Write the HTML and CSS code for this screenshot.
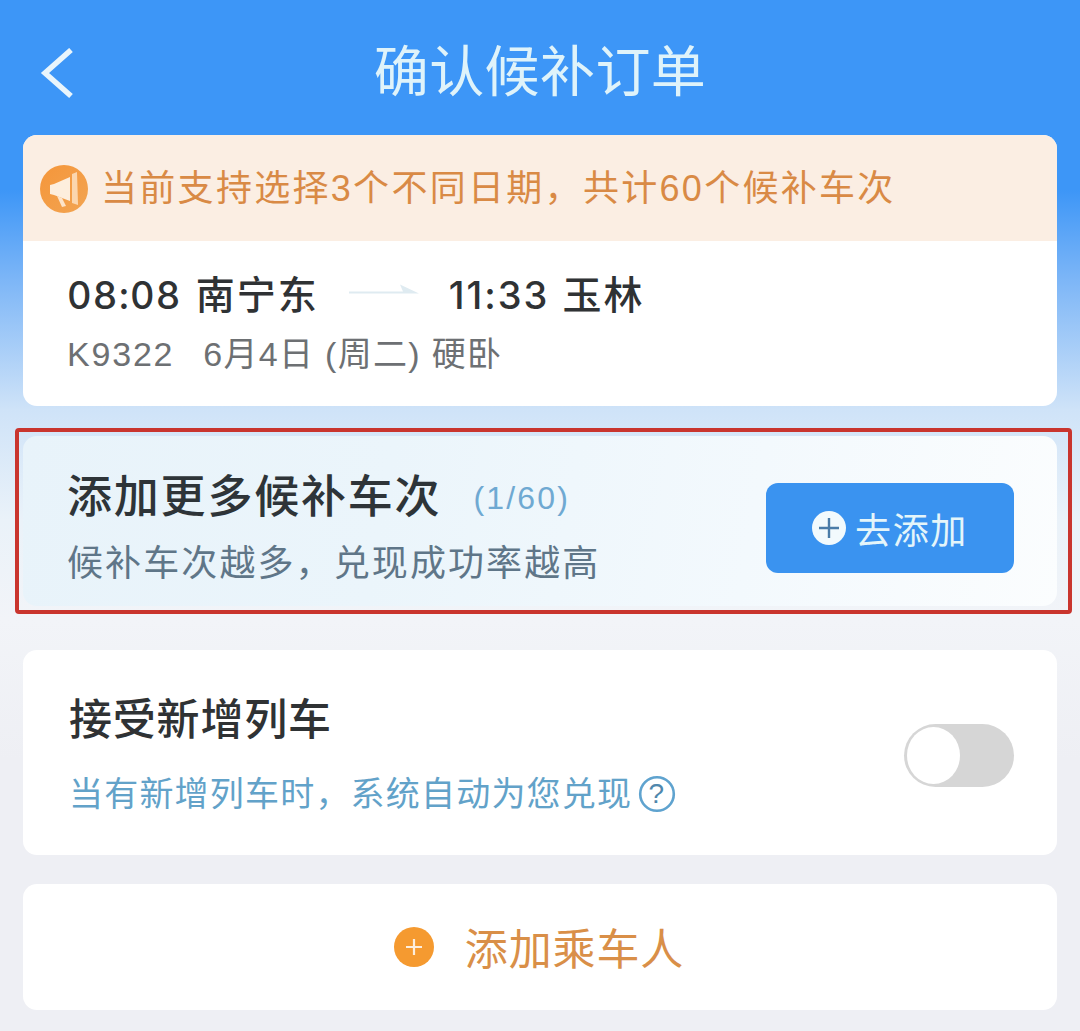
FILE: index.html
```html
<!DOCTYPE html>
<html lang="zh-CN">
<head>
<meta charset="utf-8">
<title>确认候补订单</title>
<link rel="stylesheet" href="styles.css">
</head>
<body>
<div class="page">
  <header class="nav">
    <svg class="back" viewBox="0 0 36 52" aria-hidden="true"><path d="M31 2 L5 25 L31 48"/></svg>
    <h1 class="nav-title">确认候补订单</h1>
  </header>

  <section class="card trip">
    <div class="notice">
      <svg class="horn" viewBox="0 0 48 48" aria-hidden="true">
        <defs><linearGradient id="hornFill" x1="0" y1="0" x2="1" y2="1"><stop offset="0" stop-color="#f5963a"/><stop offset="1" stop-color="#f2a452"/></linearGradient></defs>
        <circle cx="24" cy="24" r="24" fill="url(#hornFill)"/>
        <path d="M10 20 L14 19 L30 12 L30 36 L14 30 L10 29 Z" fill="#fdeedd"/>
        <path d="M32 9 L37 7 L38 40 L32 38 Z" fill="#fbd6ae"/>
        <path d="M17 31 L22 33 L26 41 L22 42 Z" fill="#fde4ca"/>
      </svg>
      <span class="notice-text">当前支持选择3个不同日期，共计60个候补车次</span>
    </div>
    <div class="trip-body">
      <div class="trip-line">
        <span class="time">08:08</span>
        <span class="station">南宁东</span>
        <svg class="arrow" viewBox="0 0 70 12" aria-hidden="true"><path d="M0 7.5 H54 L51 0.5 L70 9.5 H0 Z"/></svg>
        <span class="time time-end">11:33</span>
        <span class="station">玉林</span>
      </div>
      <div class="trip-meta"><span class="train-no">K9322</span><span>6月4日 (周二) 硬卧</span></div>
    </div>
  </section>

  <section class="card more">
    <div class="more-info">
      <div class="more-head"><span class="more-title">添加更多候补车次</span><span class="more-count">(1/60)</span></div>
      <p class="more-sub">候补车次越多，兑现成功率越高</p>
    </div>
    <div class="add-btn">
      <svg class="add-icon" viewBox="0 0 34 34" aria-hidden="true"><circle cx="17" cy="17" r="17" fill="#f2fafd"/><path d="M17 7 V27 M7 17 H27" stroke="#4a7ca8" stroke-width="2.4"/></svg>
      <span>去添加</span>
    </div>
  </section>

  <section class="card accept">
    <div>
      <div class="accept-title">接受新增列车</div>
      <div class="accept-sub">
        <span>当有新增列车时，系统自动为您兑现</span>
        <svg class="help" viewBox="0 0 38 38" aria-hidden="true"><circle cx="19" cy="19" r="16.8" fill="none" stroke="#5fa3cf" stroke-width="2.6"/><text x="19" y="28" text-anchor="middle" class="help-mark">?</text></svg>
      </div>
    </div>
    <div class="switch"><span class="knob"></span></div>
  </section>

  <section class="card passenger">
    <svg class="pass-icon" viewBox="0 0 40 40" aria-hidden="true"><circle cx="20" cy="20" r="20" fill="#f59a30"/><path d="M20 12 V28 M12 20 H28" stroke="#fdeedd" stroke-width="2.2"/></svg>
    <span class="pass-text">添加乘车人</span>
  </section>
</div>
</body>
</html>
```

FILE: styles.css
```css
*, *::after { box-sizing: border-box; }
html, body { margin: 0; padding: 0; }
body {
  width: 1080px;
  height: 1031px;
  overflow: hidden;
  font-family: "Liberation Sans", "Noto Sans CJK SC", sans-serif;
  background: linear-gradient(180deg, #3d96f7 0, #3d96f7 190px, #7db6f7 280px, #cfe3f8 410px, #eaf2f9 520px, #f2f4f8 620px, #eeeff4 760px, #eeeff4 1031px);
}
.page {
  display: flex;
  flex-direction: column;
  padding: 0 23px;
}
.nav {
  height: 135px;
  padding-top: 9px;
  display: flex;
  align-items: center;
  justify-content: center;
  position: relative;
}
.back {
  position: absolute;
  left: 17px;
  top: 48px;
  width: 36px;
  height: 52px;
  fill: none;
  stroke: #e9f5fc;
  stroke-width: 5.5;
}
.nav-title {
  margin: 0;
  font-size: 55px;
  line-height: 64px;
  font-weight: 400;
  color: #dff3fa;
  letter-spacing: 0.4px;
}
.card {
  background: #fff;
  border-radius: 14px;
}
.trip { height: 271px; overflow: hidden; }
.notice {
  height: 106px;
  background: #fbeee3;
  display: flex;
  align-items: center;
  padding-left: 17px;
  gap: 13px;
}
.horn { width: 48px; height: 48px; flex: none; margin-top: 1px; }
.notice-text {
  font-size: 36px;
  line-height: 44px;
  color: #d98a45;
  letter-spacing: 2.3px;
  margin-top: 2px;
}
.trip-body { padding: 23px 0 0 44px; }
.trip-line {
  display: flex;
  align-items: baseline;
  height: 52px;
  color: #2f3234;
}
.time {
  font-family: Inter, "Liberation Sans", sans-serif;
  font-size: 38px;
  font-weight: 450;
  font-feature-settings: "tnum";
  letter-spacing: 1.2px;
  margin-right: 14px;
}
.time-end {
  font-feature-settings: normal;
  letter-spacing: 2px;
  margin-right: 13px;
}
.station { font-size: 39px; font-weight: 500; letter-spacing: 2px; }
.arrow { width: 70px; height: 12px; margin: 0 30px 0 30px; align-self: center; fill: #dfebf1; }
.trip-meta {
  margin-top: 16px;
  display: flex;
  gap: 29px;
  font-size: 34px;
  line-height: 44px;
  color: #6d7073;
  letter-spacing: 1.3px;
}
.train-no { letter-spacing: 1.8px; }
.more {
  position: relative;
  margin-top: 30px;
  height: 170px;
  background: linear-gradient(100deg, #e8f3fa 0, #ebf5fb 35%, #f3f9fd 70%, #fbfdfe 100%);
  display: flex;
  align-items: center;
  justify-content: space-between;
  padding: 0 43px 0 44px;
}
.more::after {
  content: "";
  position: absolute;
  left: -8px;
  top: -8px;
  width: 1057px;
  height: 186px;
  border: 4px solid #c9352e;
  border-radius: 4px;
}
.more-info { align-self: flex-start; padding-top: 27px; }
.more-head { display: flex; align-items: center; height: 60px; }
.more-title { font-size: 45px; font-weight: 500; color: #2e3438; letter-spacing: 1.8px; }
.more-count { font-size: 32px; color: #6fa9d2; margin-left: 32px; letter-spacing: 2.2px; margin-top: 10px; }
.more-sub { margin: 18px 0 0; font-size: 36px; line-height: 46px; color: #5f7688; letter-spacing: 2.1px; }
.add-btn {
  width: 248px;
  height: 90px;
  margin-top: 14px;
  background: #3a93f0;
  border-radius: 12px;
  display: flex;
  align-items: center;
  justify-content: center;
  gap: 9px;
  font-size: 36px;
  color: #e4f5fa;
  letter-spacing: 1.6px;
}
.add-icon { width: 34px; height: 34px; }
.accept {
  margin-top: 44px;
  height: 205px;
  display: flex;
  align-items: center;
  justify-content: space-between;
  padding: 0 43px 0 46px;
}
.accept-title { font-size: 43px; line-height: 60px; font-weight: 500; color: #2f3234; letter-spacing: 0.8px; }
.accept-sub {
  margin-top: 22px;
  display: flex;
  align-items: center;
  gap: 6px;
  font-size: 34px;
  line-height: 44px;
  color: #62a2c9;
  letter-spacing: 1.2px;
}
.help { width: 38px; height: 38px; }
.help-mark { font-size: 28px; fill: #4f88ad; font-family: "Liberation Sans", sans-serif; }
.switch {
  width: 110px;
  height: 63px;
  border-radius: 32px;
  background: #d6d6d6;
  padding: 3px;
  margin-top: 6px;
}
.knob {
  display: block;
  width: 53px;
  height: 57px;
  border-radius: 50%;
  background: #fff;
}
.passenger {
  margin-top: 29px;
  height: 126px;
  padding-right: 2px;
  display: flex;
  align-items: center;
  justify-content: center;
  gap: 31px;
}
.pass-icon { width: 40px; height: 40px; flex: none; }
.pass-text { font-size: 43px; color: #d98f48; letter-spacing: 0.9px; margin-top: -2px; }
```
